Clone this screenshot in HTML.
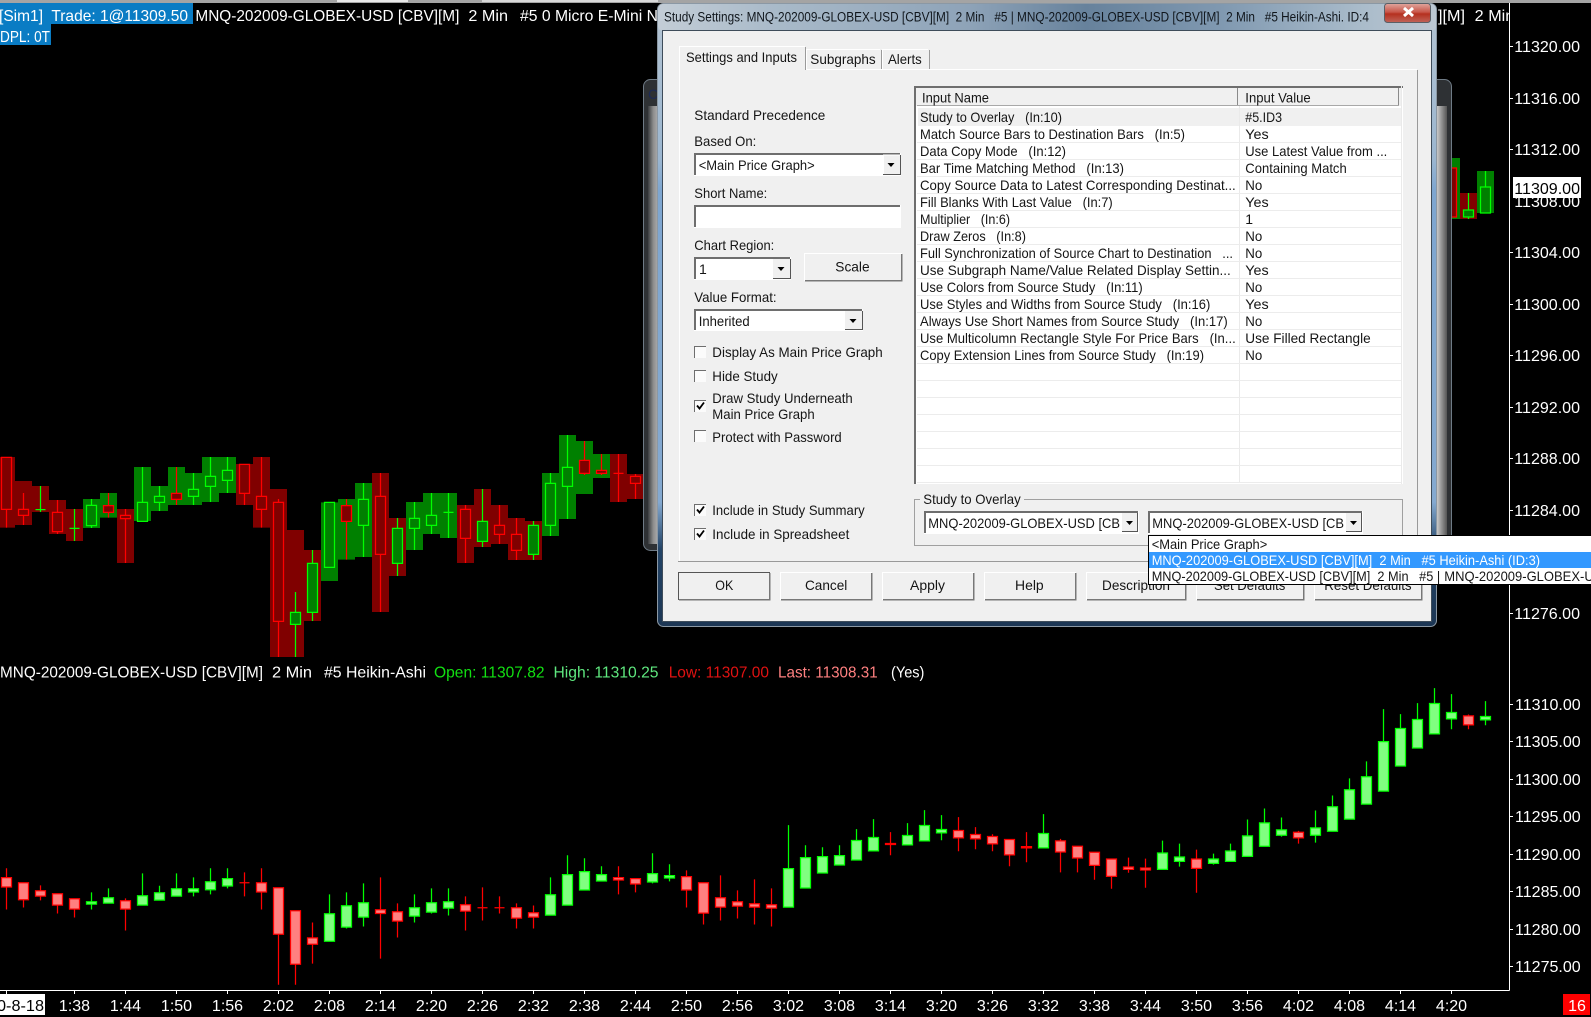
<!DOCTYPE html>
<html><head><meta charset="utf-8"><title>Study Settings</title>
<style>
html,body{margin:0;padding:0;background:#000;width:1591px;height:1017px;overflow:hidden}
svg{display:block;position:absolute;left:0;top:0}
text{font-family:"Liberation Sans",sans-serif;white-space:pre}
.c{font-size:16px;fill:#fff}
.t{font-size:14px;fill:#151515}
.m{text-anchor:middle}
.ln{shape-rendering:crispEdges}
.s path{vector-effect:non-scaling-stroke;stroke-width:1.25}
</style></head><body>
<svg width="1591" height="1017" viewBox="0 0 1591 1017" xmlns="http://www.w3.org/2000/svg">
<defs>
<linearGradient id="fv" gradientUnits="userSpaceOnUse" x1="0" y1="3" x2="0" y2="627">
<stop offset="0" stop-color="#b4c4d2"/><stop offset=".25" stop-color="#9bb6d0"/><stop offset=".3" stop-color="#7ea6d0"/><stop offset=".8" stop-color="#84a9d0"/><stop offset=".875" stop-color="#234467"/><stop offset="1" stop-color="#1c3654"/>
</linearGradient>
<linearGradient id="ft" gradientUnits="userSpaceOnUse" x1="657" y1="0" x2="1437" y2="0">
<stop offset="0" stop-color="#c3cdd6"/><stop offset=".15" stop-color="#a9bac9"/><stop offset=".4" stop-color="#8ea3b8"/><stop offset=".55" stop-color="#67829c"/><stop offset=".72" stop-color="#7f98b0"/><stop offset=".9" stop-color="#a9bbca"/><stop offset="1" stop-color="#bcc8d2"/>
</linearGradient>
<linearGradient id="cl" x1="0" y1="0" x2="0" y2="1"><stop offset="0" stop-color="#e0a79f"/><stop offset=".45" stop-color="#c8574a"/><stop offset=".55" stop-color="#b5301f"/><stop offset="1" stop-color="#c0655a"/></linearGradient>
<linearGradient id="bl" x1="0" y1="0" x2="1" y2="0"><stop offset="0" stop-color="#3a3d40"/><stop offset=".35" stop-color="#8c8c8c"/><stop offset="1" stop-color="#d0d0d0"/></linearGradient>
<linearGradient id="br" x1="0" y1="0" x2="1" y2="0"><stop offset="0" stop-color="#c8c8c8"/><stop offset="1" stop-color="#555"/></linearGradient>
</defs>
<rect width="1591" height="1017" fill="#000"/>
<rect width="1591" height="3" fill="#a4a4a4"/><rect x="337" width="71" height="2" fill="#e8e8e8"/><rect x="482" width="176" height="2" fill="#d8d8d8"/>

<!-- top chart -->
<g class="s" transform="translate(0,420) scale(1,.33333)">
<path stroke="none" fill="#800000" d="M-2 111h17V323h-17zM15 183h17V315h-17zM32 198h17V276h-17zM49 240h17V342h-17zM66 267h17V363h-17zM117 267h17V429h-17zM236 132h17V255h-17zM253 111h17V323h-17zM270 207h17V711h-17zM287 330h17V711h-17zM304 390h17V603h-17zM372 159h17V576h-17zM389 294h17V468h-17zM457 255h17V429h-17zM474 207h17V381h-17zM491 255h17V372h-17zM508 294h17V420h-17zM525 303h17V420h-17zM610 102h17V246h-17zM627 162h17V237h-17z"/>
<path stroke="none" fill="#008000" d="M83 237h17V324h-17zM100 219h17V293h-17zM134 141h17V303h-17zM151 198h17V273h-17zM168 141h17V255h-17zM185 159h17V255h-17zM202 111h17V246h-17zM219 111h17V219h-17zM321 247h17V483h-17zM338 237h17V419h-17zM355 189h17V411h-17zM406 246h17V390h-17zM423 219h17V342h-17zM440 219h17V354h-17zM542 159h17V348h-17zM559 45h17V297h-17zM576 63h17V222h-17zM593 102h17V174h-17z"/>
<path stroke="#ff0000" fill="none" d="M6.5 111V323M23.5 219V315M57.5 240V342M108.5 219V293M125.5 267V429M176.5 141V255M244.5 132V255M261.5 111V323M278.5 237V711M346.5 237V419M380.5 159V576M465.5 255V429M499.5 255V372M516.5 294V420M584.5 63V165M601.5 102V165M618.5 102V246M635.5 162V237"/>
<path stroke="#ff0000" fill="#800000" d="M1.5 112h10V268h-10zM18.5 268h10V286h-10zM52.5 277h10V335h-10zM103.5 257h10V277h-10zM120.5 286h10V296h-10zM171.5 220h10V238h-10zM239.5 133h10V220h-10zM256.5 229h10V268h-10zM273.5 247h10V604h-10zM341.5 257h10V304h-10zM375.5 229h10V403h-10zM460.5 268h10V355h-10zM494.5 316h10V343h-10zM511.5 343h10V391h-10zM579.5 121h10V160h-10zM596.5 151h10V160h-10zM613.5 160h10V160h-10zM630.5 169h10V190h-10z"/>
<path stroke="#00ff00" fill="none" d="M40.5 198V276M74.5 267V363M91.5 237V324M142.5 141V304M159.5 198V273M193.5 159V255M210.5 111V246M227.5 111V219M295.5 516V711M312.5 390V603M329.5 247V442M363.5 189V411M397.5 294V468M414.5 246V390M431.5 219V342M448.5 219V354M482.5 207V381M533.5 303V420M550.5 159V348M567.5 45V297"/>
<path stroke="#00ff00" fill="#008000" d="M35.5 269h10V269h-10zM69.5 325h10V325h-10zM86.5 256h10V317h-10zM137.5 247h10V304h-10zM154.5 229h10V247h-10zM188.5 208h10V229h-10zM205.5 169h10V199h-10zM222.5 151h10V181h-10zM290.5 577h10V613h-10zM307.5 430h10V577h-10zM324.5 247h10V442h-10zM358.5 238h10V316h-10zM392.5 325h10V430h-10zM409.5 295h10V325h-10zM426.5 286h10V316h-10zM443.5 277h10V277h-10zM477.5 304h10V364h-10zM528.5 316h10V403h-10zM545.5 190h10V316h-10zM562.5 142h10V199h-10z"/>
</g>
<!-- top chart, right part -->
<g class="s">
<path stroke="none" fill="#008000" d="M1443 158h17V219h-17zM1477 171h17V213h-17z"/>
<path stroke="none" fill="#800000" d="M1460 193h17V219h-17z"/>
<path stroke="#ff0000" fill="#800000" d="M1446.5 168h10V217h-10z"/>
<path stroke="#00ff00" fill="none" d="M1468.5 193V219M1485.5 171V213"/>
<path stroke="#00ff00" fill="#008000" d="M1463.5 210h10V217h-10zM1480.5 187h10V213h-10z"/>
</g>

<!-- bottom chart -->
<g class="s" transform="translate(0,780) scale(1,.3345)">
<path stroke="#ff0000" fill="none" d="M6.5 264V387M23.5 307V381M40.5 315V360M57.5 340V399M74.5 355V411M125.5 354V450M244.5 276V348M261.5 264V387M278.5 322V612M295.5 391V612M312.5 426V549M380.5 291V534M397.5 369V471M465.5 348V450M482.5 321V420M499.5 348V399M516.5 369V444M533.5 375V444M618.5 258V342M635.5 295V336M686.5 270V381M703.5 307V432M720.5 285V420M737.5 330V414M754.5 297V432M771.5 324V438M890.5 156V225M958.5 111V213M975.5 141V207M992.5 162V213M1009.5 178V258M1026.5 156V246"/>
<path stroke="#ff0000" fill="#ff8080" d="M1.5 292h10V320h-10zM18.5 307h10V358h-10zM35.5 331h10V347h-10zM52.5 340h10V374h-10zM69.5 355h10V386h-10zM120.5 361h10V386h-10zM239.5 307h10V307h-10zM256.5 307h10V335h-10zM273.5 322h10V461h-10zM290.5 391h10V551h-10zM307.5 472h10V491h-10zM375.5 388h10V399h-10zM392.5 394h10V422h-10zM460.5 373h10V392h-10zM477.5 382h10V382h-10zM494.5 382h10V382h-10zM511.5 382h10V413h-10zM528.5 397h10V410h-10zM613.5 292h10V299h-10zM630.5 295h10V311h-10zM681.5 289h10V329h-10zM698.5 307h10V398h-10zM715.5 352h10V380h-10zM732.5 364h10V377h-10zM749.5 370h10V380h-10zM766.5 373h10V383h-10zM885.5 190h10V193h-10zM953.5 151h10V173h-10zM970.5 163h10V176h-10zM987.5 169h10V191h-10zM1004.5 178h10V224h-10zM1021.5 199h10V203h-10z"/>
<path stroke="#00ff00" fill="none" d="M91.5 336V387M108.5 324V368M142.5 279V374M159.5 316V359M176.5 279V347M193.5 291V348M210.5 264V342M227.5 264V324M329.5 342V482M346.5 336V444M363.5 309V438M414.5 342V426M431.5 324V399M448.5 324V405M550.5 291V404M567.5 225V374M584.5 234V329M601.5 258V302M652.5 219V309M669.5 252V303M788.5 135V380M805.5 195V323M822.5 201V278M839.5 195V254M856.5 147V239M873.5 117V212M907.5 129V194M924.5 90V182M941.5 105V180M1043.5 102V203"/>
<path stroke="#00ff00" fill="#80ff80" d="M86.5 364h10V371h-10zM103.5 352h10V368h-10zM137.5 346h10V374h-10zM154.5 337h10V359h-10zM171.5 325h10V347h-10zM188.5 325h10V335h-10zM205.5 304h10V328h-10zM222.5 295h10V317h-10zM324.5 400h10V482h-10zM341.5 376h10V440h-10zM358.5 367h10V410h-10zM409.5 382h10V407h-10zM426.5 367h10V395h-10zM443.5 364h10V383h-10zM545.5 343h10V404h-10zM562.5 283h10V374h-10zM579.5 274h10V329h-10zM596.5 283h10V302h-10zM647.5 280h10V305h-10zM664.5 286h10V293h-10zM783.5 265h10V380h-10zM800.5 232h10V323h-10zM817.5 229h10V278h-10zM834.5 226h10V254h-10zM851.5 181h10V239h-10zM868.5 172h10V212h-10zM902.5 166h10V194h-10zM919.5 136h10V182h-10zM936.5 148h10V158h-10zM1038.5 160h10V203h-10z"/>
</g>
<g class="s" transform="translate(0,670) scale(1,.3345)">
<path stroke="#ff0000" fill="none" d="M1060.5 505V605M1077.5 527V605M1094.5 545V627M1111.5 565V654M1128.5 561V606M1145.5 564V651M1196.5 537V666M1298.5 481V519M1468.5 133V177"/>
<path stroke="#ff0000" fill="#ff8080" d="M1055.5 511h10V544h-10zM1072.5 527h10V562h-10zM1089.5 545h10V584h-10zM1106.5 565h10V617h-10zM1123.5 589h10V596h-10zM1140.5 592h10V598h-10zM1191.5 565h10V593h-10zM1293.5 485h10V502h-10zM1463.5 137h10V164h-10z"/>
<path stroke="#00ff00" fill="none" d="M1162.5 510V596M1179.5 519V588M1213.5 549V582M1230.5 519V572M1247.5 447V557M1264.5 414V527M1281.5 441V498M1315.5 420V516M1332.5 375V482M1349.5 324V446M1366.5 273V401M1383.5 117V362M1400.5 132V287M1417.5 99V233M1434.5 54V191M1451.5 72V177M1485.5 93V165"/>
<path stroke="#00ff00" fill="#80ff80" d="M1157.5 547h10V596h-10zM1174.5 559h10V572h-10zM1208.5 565h10V578h-10zM1225.5 541h10V572h-10zM1242.5 496h10V557h-10zM1259.5 457h10V527h-10zM1276.5 478h10V494h-10zM1310.5 472h10V494h-10zM1327.5 409h10V482h-10zM1344.5 358h10V446h-10zM1361.5 319h10V401h-10zM1378.5 214h10V362h-10zM1395.5 175h10V287h-10zM1412.5 148h10V233h-10zM1429.5 100h10V191h-10zM1446.5 127h10V146h-10zM1480.5 139h10V149h-10z"/>
</g>

<!-- header text -->
<rect x="0" y="3" width="193" height="21" fill="#0a7cc4"/><rect x="0" y="24" width="51" height="21" fill="#0a7cc4"/>
<text class="c" x="-1" y="21" textLength="189" lengthAdjust="spacingAndGlyphs">[Sim1]  Trade: 1@11309.50</text>
<text class="c" x="0" y="42" textLength="50" lengthAdjust="spacingAndGlyphs">DPL: 0T</text>
<text class="c" x="195.4" y="21" textLength="264" lengthAdjust="spacingAndGlyphs">MNQ-202009-GLOBEX-USD [CBV][M]</text>
<text class="c" x="468.4" y="21" textLength="39.6" lengthAdjust="spacingAndGlyphs">2 Min</text>
<text class="c" x="520" y="21" textLength="138" lengthAdjust="spacingAndGlyphs">#5 0 Micro E-Mini N</text>
<text class="c" x="1438" y="21" textLength="27" lengthAdjust="spacingAndGlyphs">][M]</text>
<svg x="1470" y="0" width="39" height="30"><text class="c" x="4.7" y="21" textLength="39.6" lengthAdjust="spacingAndGlyphs">2 Min</text></svg>

<text class="c" x="0" y="677.5" textLength="263" lengthAdjust="spacingAndGlyphs">MNQ-202009-GLOBEX-USD [CBV][M]</text>
<text class="c" x="272" y="677.5" textLength="40" lengthAdjust="spacingAndGlyphs">2 Min</text>
<text class="c" x="324" y="677.5" textLength="102" lengthAdjust="spacingAndGlyphs">#5 Heikin-Ashi</text>
<text class="c" x="434" y="677.5" textLength="110.6" lengthAdjust="spacingAndGlyphs" style="fill:#12e012">Open: 11307.82</text>
<text class="c" x="553.5" y="677.5" textLength="105" lengthAdjust="spacingAndGlyphs" style="fill:#5fe87f">High: 11310.25</text>
<text class="c" x="668.7" y="677.5" textLength="100.3" lengthAdjust="spacingAndGlyphs" style="fill:#e01212">Low: 11307.00</text>
<text class="c" x="778" y="677.5" textLength="99.7" lengthAdjust="spacingAndGlyphs" style="fill:#ff8080">Last: 11308.31</text>
<text class="c" x="891" y="677.5" textLength="33.4" lengthAdjust="spacingAndGlyphs">(Yes)</text>

<!-- axes -->
<g class="ln" stroke="#fff" stroke-width="1" fill="none">
<path d="M1509.5 3V990.5M0 990.5H1509.5"/>
<path d="M1510 46.5h3M1510 98.5h3M1510 149.5h3M1510 252.5h3M1510 304.5h3M1510 355.5h3M1510 407.5h3M1510 458.5h3M1510 510.5h3M1510 613.5h3"/>
<path d="M1510 704.5h3M1510 741.5h3M1510 779.5h3M1510 816.5h3M1510 854.5h3M1510 891.5h3M1510 929.5h3M1510 966.5h3"/>
<path d="M6.5 991v3M74.5 991v3M125.5 991v3M176.5 991v3M227.5 991v3M278.5 991v3M329.5 991v3M380.5 991v3M431.5 991v3M482.5 991v3M533.5 991v3M584.5 991v3M635.5 991v3M686.5 991v3M737.5 991v3M788.5 991v3M839.5 991v3M890.5 991v3M941.5 991v3M992.5 991v3M1043.5 991v3M1094.5 991v3M1145.5 991v3M1196.5 991v3M1247.5 991v3M1298.5 991v3M1349.5 991v3M1400.5 991v3M1451.5 991v3"/>
</g>
<g>
<text class="c" x="1514.3" y="52" textLength="65.7" lengthAdjust="spacingAndGlyphs">11320.00</text>
<text class="c" x="1514.3" y="104" textLength="65.7" lengthAdjust="spacingAndGlyphs">11316.00</text>
<text class="c" x="1514.3" y="155" textLength="65.7" lengthAdjust="spacingAndGlyphs">11312.00</text>
<text class="c" x="1514.3" y="207" textLength="65.7" lengthAdjust="spacingAndGlyphs">11308.00</text>
<rect x="1513" y="177" width="68" height="21" fill="#fff"/>
<text class="c" x="1514.3" y="194" textLength="65.7" lengthAdjust="spacingAndGlyphs" style="fill:#000">11309.00</text>
<text class="c" x="1514.3" y="258" textLength="65.7" lengthAdjust="spacingAndGlyphs">11304.00</text>
<text class="c" x="1514.3" y="310" textLength="65.7" lengthAdjust="spacingAndGlyphs">11300.00</text>
<text class="c" x="1514.3" y="361" textLength="65.7" lengthAdjust="spacingAndGlyphs">11296.00</text>
<text class="c" x="1514.3" y="413" textLength="65.7" lengthAdjust="spacingAndGlyphs">11292.00</text>
<text class="c" x="1514.3" y="464" textLength="65.7" lengthAdjust="spacingAndGlyphs">11288.00</text>
<text class="c" x="1514.3" y="516" textLength="65.7" lengthAdjust="spacingAndGlyphs">11284.00</text>
<text class="c" x="1514.3" y="619" textLength="65.7" lengthAdjust="spacingAndGlyphs">11276.00</text>
<text class="c" x="1515" y="710" textLength="65.7" lengthAdjust="spacingAndGlyphs">11310.00</text>
<text class="c" x="1515" y="747" textLength="65.7" lengthAdjust="spacingAndGlyphs">11305.00</text>
<text class="c" x="1515" y="785" textLength="65.7" lengthAdjust="spacingAndGlyphs">11300.00</text>
<text class="c" x="1515" y="822" textLength="65.7" lengthAdjust="spacingAndGlyphs">11295.00</text>
<text class="c" x="1515" y="860" textLength="65.7" lengthAdjust="spacingAndGlyphs">11290.00</text>
<text class="c" x="1515" y="897" textLength="65.7" lengthAdjust="spacingAndGlyphs">11285.00</text>
<text class="c" x="1515" y="935" textLength="65.7" lengthAdjust="spacingAndGlyphs">11280.00</text>
<text class="c" x="1515" y="972" textLength="65.7" lengthAdjust="spacingAndGlyphs">11275.00</text>
</g>
<rect x="0" y="994" width="45" height="21" fill="#fff"/>
<text class="c" x="-3" y="1011" textLength="47" lengthAdjust="spacingAndGlyphs" style="fill:#000">0-8-18</text>
<g>
<text class="c m" x="74.5" y="1011">1:38</text><text class="c m" x="125.5" y="1011">1:44</text><text class="c m" x="176.5" y="1011">1:50</text><text class="c m" x="227.5" y="1011">1:56</text><text class="c m" x="278.5" y="1011">2:02</text><text class="c m" x="329.5" y="1011">2:08</text><text class="c m" x="380.5" y="1011">2:14</text><text class="c m" x="431.5" y="1011">2:20</text><text class="c m" x="482.5" y="1011">2:26</text><text class="c m" x="533.5" y="1011">2:32</text><text class="c m" x="584.5" y="1011">2:38</text><text class="c m" x="635.5" y="1011">2:44</text><text class="c m" x="686.5" y="1011">2:50</text><text class="c m" x="737.5" y="1011">2:56</text><text class="c m" x="788.5" y="1011">3:02</text><text class="c m" x="839.5" y="1011">3:08</text><text class="c m" x="890.5" y="1011">3:14</text><text class="c m" x="941.5" y="1011">3:20</text><text class="c m" x="992.5" y="1011">3:26</text><text class="c m" x="1043.5" y="1011">3:32</text><text class="c m" x="1094.5" y="1011">3:38</text><text class="c m" x="1145.5" y="1011">3:44</text><text class="c m" x="1196.5" y="1011">3:50</text><text class="c m" x="1247.5" y="1011">3:56</text><text class="c m" x="1298.5" y="1011">4:02</text><text class="c m" x="1349.5" y="1011">4:08</text><text class="c m" x="1400.5" y="1011">4:14</text><text class="c m" x="1451.5" y="1011">4:20</text>
</g>
<rect x="1563" y="994" width="27" height="21" fill="#ff0000"/>
<text class="c m" x="1577" y="1011">16</text>

<!-- window behind -->
<rect x="643.5" y="79.5" width="808" height="471" rx="7" fill="#2e3134" stroke="#6f7b86"/>
<rect x="648" y="106" width="15" height="438" fill="url(#bl)"/>
<rect x="1437" y="106" width="10" height="438" fill="url(#br)"/>
<text x="648" y="99" style="font-size:14px;fill:#1d2a55">C</text>

<!-- main dialog frame -->
<rect x="657.5" y="3.5" width="779" height="623" rx="6" fill="url(#fv)" stroke="#8b98a4"/>
<rect x="658" y="4" width="778" height="27" rx="5" fill="url(#ft)"/>
<rect x="662.5" y="30.5" width="769" height="591" fill="#f0f0f0" stroke="#3e4c5a" class="ln"/>
<text x="664" y="21.5" textLength="705" lengthAdjust="spacingAndGlyphs" style="font-size:13.5px;fill:#10161c">Study Settings: MNQ-202009-GLOBEX-USD [CBV][M]  2 Min   #5 | MNQ-202009-GLOBEX-USD [CBV][M]  2 Min   #5 Heikin-Ashi. ID:4</text>
<rect x="1384.5" y="3.5" width="46" height="19" rx="3" fill="url(#cl)" stroke="#5a5f66"/>
<path d="M1404 8l9 8M1413 8l-9 8" stroke="#fff" stroke-width="3" fill="none"/>

<!-- tab pane -->
<rect x="679" y="70" width="738" height="491" fill="#f0f0f0"/>
<g class="ln" fill="none">
<path d="M679.5 561V69.5H1417" stroke="#fff"/>
<path d="M1417.5 70V561.5H678" stroke="#999"/>
<path d="M679.5 70V46.5H805" stroke="#fff"/>
<path d="M805.5 47V70" stroke="#9a9a9a"/>
<path d="M806.5 69V49.5H880" stroke="#fff"/>
<path d="M881.5 50V69" stroke="#9a9a9a"/>
<path d="M882.5 69V49.5H928" stroke="#fff"/>
<path d="M929.5 50V69" stroke="#9a9a9a"/>
</g>
<rect x="680" y="47" width="125" height="25" fill="#f0f0f0"/>
<text class="t" x="686" y="62" textLength="111" lengthAdjust="spacingAndGlyphs">Settings and Inputs</text>
<text class="t" x="810.3" y="64" textLength="65.4" lengthAdjust="spacingAndGlyphs">Subgraphs</text>
<text class="t" x="888" y="64" textLength="33.7" lengthAdjust="spacingAndGlyphs">Alerts</text>

<!-- left column -->
<text class="t" x="694.3" y="120" textLength="131" lengthAdjust="spacingAndGlyphs">Standard Precedence</text>
<text class="t" x="694.3" y="146" textLength="62" lengthAdjust="spacingAndGlyphs">Based On:</text>
<text class="t" x="694.3" y="198" textLength="73" lengthAdjust="spacingAndGlyphs">Short Name:</text>
<text class="t" x="694.3" y="250" textLength="80" lengthAdjust="spacingAndGlyphs">Chart Region:</text>
<text class="t" x="694.3" y="302" textLength="82.3" lengthAdjust="spacingAndGlyphs">Value Format:</text>

<g class="ln">
<!-- combos -->
<rect x="694" y="153" width="207" height="23" fill="#fff"/><path d="M695 175V154H900" stroke="#6e6e6e" stroke-width="2" fill="none"/>
<rect x="883" y="155" width="17" height="19" fill="#f0f0f0"/><path d="M883 174.5H900.5V155" stroke="#555" fill="none"/><path d="M883.5 174V155H900" stroke="#fff" fill="none"/>
<rect x="694" y="205" width="207" height="23" fill="#fff"/><path d="M695 227V206H900" stroke="#6e6e6e" stroke-width="2" fill="none"/>
<rect x="694" y="257" width="97" height="23" fill="#fff"/><path d="M695 279V258H790" stroke="#6e6e6e" stroke-width="2" fill="none"/>
<rect x="773" y="259" width="17" height="19" fill="#f0f0f0"/><path d="M773 278.5H790.5V259" stroke="#555" fill="none"/>
<rect x="694" y="309" width="169" height="22" fill="#fff"/><path d="M695 330V310H862" stroke="#6e6e6e" stroke-width="2" fill="none"/>
<rect x="845" y="311" width="17" height="19" fill="#f0f0f0"/><path d="M845 329.5H862.5V311" stroke="#555" fill="none"/>
<!-- scale button -->
<rect x="804.5" y="253.5" width="97" height="27" fill="#f0f0f0" stroke="#fff"/><path d="M805 280.5H901.5V254" stroke="#777" stroke-width="1.5" fill="none"/>
</g>
<path d="M887.5 163h7l-3.5 4zM777.5 267h7l-3.5 4zM849.5 319h7l-3.5 4z" fill="#000"/>
<text class="t" x="698.7" y="170" textLength="116" lengthAdjust="spacingAndGlyphs">&lt;Main Price Graph&gt;</text>
<text class="t" x="699" y="274">1</text>
<text class="t" x="835.3" y="271.5" textLength="34.3" lengthAdjust="spacingAndGlyphs">Scale</text>
<text class="t" x="698.7" y="326" textLength="51" lengthAdjust="spacingAndGlyphs">Inherited</text>

<!-- checkboxes -->
<g class="ln">
<g fill="#fbfbfb">
<rect x="694" y="346" width="12" height="12"/><rect x="694" y="370" width="12" height="12"/><rect x="694" y="400" width="12" height="12"/><rect x="694" y="430" width="12" height="12"/><rect x="694" y="504" width="12" height="12"/><rect x="694" y="528" width="12" height="12"/>
</g>
<path fill="none" stroke="#6e6e6e" d="M694.5 358V346.5H706M694.5 382V370.5H706M694.5 412V400.5H706M694.5 442V430.5H706M694.5 516V504.5H706M694.5 540V528.5H706"/>
</g>
<path fill="none" stroke="#000" stroke-width="1.8" d="M697 405.5l2.5 3 4.5-6M697 509.5l2.5 3 4.5-6M697 533.5l2.5 3 4.5-6"/>
<text class="t" x="712.3" y="357" textLength="170.4" lengthAdjust="spacingAndGlyphs">Display As Main Price Graph</text>
<text class="t" x="712.3" y="381" textLength="65.4" lengthAdjust="spacingAndGlyphs">Hide Study</text>
<text class="t" x="712.3" y="403" textLength="140.4" lengthAdjust="spacingAndGlyphs">Draw Study Underneath</text>
<text class="t" x="712.3" y="419" textLength="102.4" lengthAdjust="spacingAndGlyphs">Main Price Graph</text>
<text class="t" x="712.3" y="442" textLength="129.4" lengthAdjust="spacingAndGlyphs">Protect with Password</text>
<text class="t" x="712.3" y="515" textLength="152.4" lengthAdjust="spacingAndGlyphs">Include in Study Summary</text>
<text class="t" x="712.3" y="539" textLength="137" lengthAdjust="spacingAndGlyphs">Include in Spreadsheet</text>

<!-- grid -->
<rect x="914" y="86" width="489" height="398" fill="#fff"/>
<rect x="916" y="88" width="486" height="18" fill="#f0f0f0"/>
<rect x="918" y="108" width="483" height="18" fill="#f0f0f0"/>
<g class="ln" fill="none">
<path d="M915 484V87H1403" stroke="#6e6e6e" stroke-width="2"/>
<path d="M917 105.5H1399" stroke="#a8a8a8"/>
<path d="M1237.5 88V105" stroke="#8a8a8a"/><path d="M1398.5 88V105" stroke="#8a8a8a"/>
<path d="M1239.5 106V483" stroke="#eaeaea"/><path d="M1401.5 86V484" stroke="#eaeaea"/>
<path stroke="#ececec" d="M917 142.5H1401M917 159.5H1401M917 176.5H1401M917 193.5H1401M917 210.5H1401M917 227.5H1401M917 244.5H1401M917 261.5H1401M917 278.5H1401M917 295.5H1401M917 312.5H1401M917 329.5H1401M917 346.5H1401M917 363.5H1401M917 380.5H1401M917 397.5H1401M917 414.5H1401M917 431.5H1401M917 448.5H1401M917 465.5H1401M917 482.5H1401"/>
</g>
<text class="t" x="922" y="102.5" textLength="67" lengthAdjust="spacingAndGlyphs">Input Name</text>
<text class="t" x="1245.3" y="102.5" textLength="65.4" lengthAdjust="spacingAndGlyphs">Input Value</text>
<text class="t" x="920" y="122" textLength="142" lengthAdjust="spacingAndGlyphs">Study to Overlay   (In:10)</text>
<text class="t" x="920" y="139" textLength="265" lengthAdjust="spacingAndGlyphs">Match Source Bars to Destination Bars   (In:5)</text>
<text class="t" x="920" y="156" textLength="146" lengthAdjust="spacingAndGlyphs">Data Copy Mode   (In:12)</text>
<text class="t" x="920" y="173" textLength="204" lengthAdjust="spacingAndGlyphs">Bar Time Matching Method   (In:13)</text>
<text class="t" x="920" y="190" textLength="315.7" lengthAdjust="spacingAndGlyphs">Copy Source Data to Latest Corresponding Destinat...</text>
<text class="t" x="920" y="207" textLength="192.7" lengthAdjust="spacingAndGlyphs">Fill Blanks With Last Value   (In:7)</text>
<text class="t" x="920" y="224" textLength="90" lengthAdjust="spacingAndGlyphs">Multiplier   (In:6)</text>
<text class="t" x="920" y="241" textLength="106" lengthAdjust="spacingAndGlyphs">Draw Zeros   (In:8)</text>
<text class="t" x="920" y="258" textLength="313" lengthAdjust="spacingAndGlyphs">Full Synchronization of Source Chart to Destination   ...</text>
<text class="t" x="920" y="275" textLength="310.7" lengthAdjust="spacingAndGlyphs">Use Subgraph Name/Value Related Display Settin...</text>
<text class="t" x="920" y="292" textLength="222.7" lengthAdjust="spacingAndGlyphs">Use Colors from Source Study   (In:11)</text>
<text class="t" x="920" y="309" textLength="290.3" lengthAdjust="spacingAndGlyphs">Use Styles and Widths from Source Study   (In:16)</text>
<text class="t" x="920" y="326" textLength="307.7" lengthAdjust="spacingAndGlyphs">Always Use Short Names from Source Study   (In:17)</text>
<text class="t" x="920" y="343" textLength="315.7" lengthAdjust="spacingAndGlyphs">Use Multicolumn Rectangle Style For Price Bars   (In...</text>
<text class="t" x="920" y="360" textLength="284" lengthAdjust="spacingAndGlyphs">Copy Extension Lines from Source Study   (In:19)</text>
<text class="t" x="1245.3" y="122" textLength="36.7" lengthAdjust="spacingAndGlyphs">#5.ID3</text>
<text class="t" x="1245.3" y="139" textLength="23.4" lengthAdjust="spacingAndGlyphs">Yes</text>
<text class="t" x="1245.3" y="156" textLength="142" lengthAdjust="spacingAndGlyphs">Use Latest Value from ...</text>
<text class="t" x="1245.3" y="173" textLength="101.4" lengthAdjust="spacingAndGlyphs">Containing Match</text>
<text class="t" x="1245.3" y="190" textLength="17" lengthAdjust="spacingAndGlyphs">No</text>
<text class="t" x="1245.3" y="207" textLength="23.4" lengthAdjust="spacingAndGlyphs">Yes</text>
<text class="t" x="1245.3" y="224">1</text>
<text class="t" x="1245.3" y="241" textLength="17" lengthAdjust="spacingAndGlyphs">No</text>
<text class="t" x="1245.3" y="258" textLength="17" lengthAdjust="spacingAndGlyphs">No</text>
<text class="t" x="1245.3" y="275" textLength="23.4" lengthAdjust="spacingAndGlyphs">Yes</text>
<text class="t" x="1245.3" y="292" textLength="17" lengthAdjust="spacingAndGlyphs">No</text>
<text class="t" x="1245.3" y="309" textLength="23.4" lengthAdjust="spacingAndGlyphs">Yes</text>
<text class="t" x="1245.3" y="326" textLength="17" lengthAdjust="spacingAndGlyphs">No</text>
<text class="t" x="1245.3" y="343" textLength="125.4" lengthAdjust="spacingAndGlyphs">Use Filled Rectangle</text>
<text class="t" x="1245.3" y="360" textLength="17" lengthAdjust="spacingAndGlyphs">No</text>

<!-- group box -->
<g class="ln" fill="none"><rect x="914.5" y="499.5" width="488" height="46" stroke="#a0a0a0"/></g>
<rect x="920" y="495" width="104" height="9" fill="#f0f0f0"/>
<text class="t" x="923.3" y="504" textLength="97.4" lengthAdjust="spacingAndGlyphs">Study to Overlay</text>
<g class="ln">
<rect x="924" y="511" width="215" height="23" fill="#fff"/><path d="M925 533V512H1138" stroke="#6e6e6e" stroke-width="2" fill="none"/>
<rect x="1122" y="513" width="16" height="19" fill="#f0f0f0"/><path d="M1122 531.5H1137.5V513" stroke="#555" fill="none"/>
<rect x="1148" y="511" width="215" height="23" fill="#fff"/><path d="M1149 533V512H1362" stroke="#6e6e6e" stroke-width="2" fill="none"/>
<rect x="1346" y="513" width="16" height="19" fill="#f0f0f0"/><path d="M1346 531.5H1361.5V513" stroke="#555" fill="none"/>
</g>
<path d="M1126 521h7l-3.5 4zM1350 521h7l-3.5 4z" fill="#000"/>
<text class="t" x="928.3" y="528" textLength="191.7" lengthAdjust="spacingAndGlyphs">MNQ-202009-GLOBEX-USD [CB</text>
<text class="t" x="1152.3" y="528" textLength="191.7" lengthAdjust="spacingAndGlyphs">MNQ-202009-GLOBEX-USD [CB</text>

<!-- buttons -->
<g class="ln">
<g fill="#f0f0f0" stroke="#fff">
<rect x="678.5" y="572.5" width="91" height="27" stroke="#555"/>
<rect x="780.5" y="572.5" width="91" height="27"/><rect x="882.5" y="572.5" width="91" height="27"/><rect x="984.5" y="572.5" width="91" height="27"/><rect x="1086.5" y="572.5" width="99" height="27"/><rect x="1196.5" y="572.5" width="107" height="27"/><rect x="1314.5" y="572.5" width="107" height="27"/>
</g>
<path fill="none" stroke="#777" stroke-width="1.5" d="M679 599.5H769.5V573M781 599.5H871.5V573M883 599.5H973.5V573M985 599.5H1075.5V573M1087 599.5H1185.5V573M1197 599.5H1303.5V573M1315 599.5H1421.5V573"/>
</g>
<text class="t" x="715.3" y="590" textLength="18" lengthAdjust="spacingAndGlyphs">OK</text>
<text class="t" x="805" y="590" textLength="42.3" lengthAdjust="spacingAndGlyphs">Cancel</text>
<text class="t" x="910" y="590" textLength="35" lengthAdjust="spacingAndGlyphs">Apply</text>
<text class="t" x="1015" y="590" textLength="28.7" lengthAdjust="spacingAndGlyphs">Help</text>
<text class="t" x="1102" y="590" textLength="68" lengthAdjust="spacingAndGlyphs">Description</text>
<text class="t" x="1214" y="590" textLength="71.3" lengthAdjust="spacingAndGlyphs">Set Defaults</text>
<text class="t" x="1324.3" y="590" textLength="87.3" lengthAdjust="spacingAndGlyphs">Reset Defaults</text>

<!-- dropdown list -->
<rect x="1148.5" y="535.5" width="450" height="49" fill="#fff" stroke="#000" class="ln"/>
<rect x="1149" y="552" width="442" height="16" fill="#3399ff"/>
<text class="t" x="1151.7" y="549" textLength="115.6" lengthAdjust="spacingAndGlyphs">&lt;Main Price Graph&gt;</text>
<text class="t" x="1151.7" y="565" textLength="388.3" lengthAdjust="spacingAndGlyphs" style="fill:#fff">MNQ-202009-GLOBEX-USD [CBV][M]  2 Min   #5 Heikin-Ashi (ID:3)</text>
<text class="t" x="1151.7" y="581" textLength="292" lengthAdjust="spacingAndGlyphs">MNQ-202009-GLOBEX-USD [CBV][M]  2 Min   #5 | </text>
<text class="t" x="1444.3" y="581" textLength="223" lengthAdjust="spacingAndGlyphs">MNQ-202009-GLOBEX-USD [CBV][M]</text>
</svg>
</body></html>
